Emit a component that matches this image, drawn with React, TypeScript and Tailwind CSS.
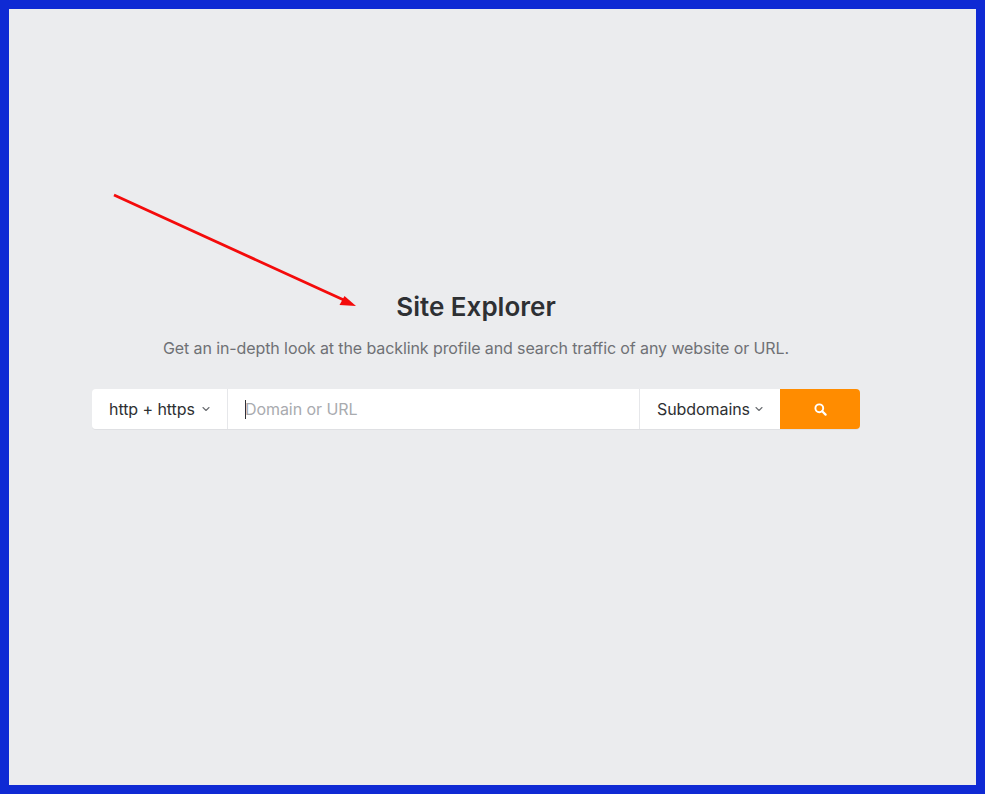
import { ChevronDown } from "lucide-react";

export default function App() {
  return (
    <div className="relative h-[794px] w-[985px] overflow-hidden border-[9px] border-[#0f2ad4] bg-[#ebecee] font-['Inter',sans-serif]">
      <div className="ml-[83px] flex w-[768px] flex-col items-center pt-[280px]">
        <h1 className="text-[26px] leading-[36px] font-semibold text-[#2e3033]">Site Explorer</h1>
        <p className="mt-[11px] text-[16px] leading-[24px] tracking-[-0.1px] text-[#6f7175]">
          Get an in-depth look at the backlink profile and search traffic of any website or URL.
        </p>

        <div className="mt-[29px] flex h-[41px] w-full rounded-[4px] border-b border-[#dfe0e3] text-[16px] tracking-[-0.07px] text-[#2e3033]">
          <button className="flex w-[136px] items-center gap-[5px] rounded-l-[4px] border-r border-[#e6e7ea] bg-white pl-[17px]">
            <span>http + https</span>
            <ChevronDown size={12} strokeWidth={2.2} className="text-[#6a6d71]" />
          </button>
          <div className="flex flex-1 items-center bg-white pl-[17px]">
            <span className="-mr-px h-[19px] w-px bg-[#2e3033]" />
            <span className="text-[#a9abaf]">Domain or URL</span>
          </div>
          <button className="flex w-[141px] items-center gap-[3px] border-l border-[#e6e7ea] bg-white pl-[17px]">
            <span>Subdomains</span>
            <ChevronDown size={12} strokeWidth={2.2} className="text-[#6a6d71]" />
          </button>
          <button className="flex w-[80px] items-center justify-center rounded-r-[4px] bg-[#ff8c00]">
            <svg width="13" height="13" viewBox="0 0 13 13" fill="none" stroke="white">
              <circle cx="5.3" cy="5.3" r="3.9" strokeWidth="1.9" />
              <path d="M8.2 8.2L11.6 11.6" strokeWidth="2.2" strokeLinecap="round" />
            </svg>
          </button>
        </div>
      </div>

      {/* red annotation arrow */}
      <svg className="absolute top-[-9px] left-[-9px]" width="985" height="794" fill="none">
        <path d="M114 195L346 301" stroke="#f40b0b" strokeWidth="2.8" />
        <path d="M356 306L339.500 305L344.500 296Z" fill="#f40b0b" />
      </svg>
    </div>
  );
}
